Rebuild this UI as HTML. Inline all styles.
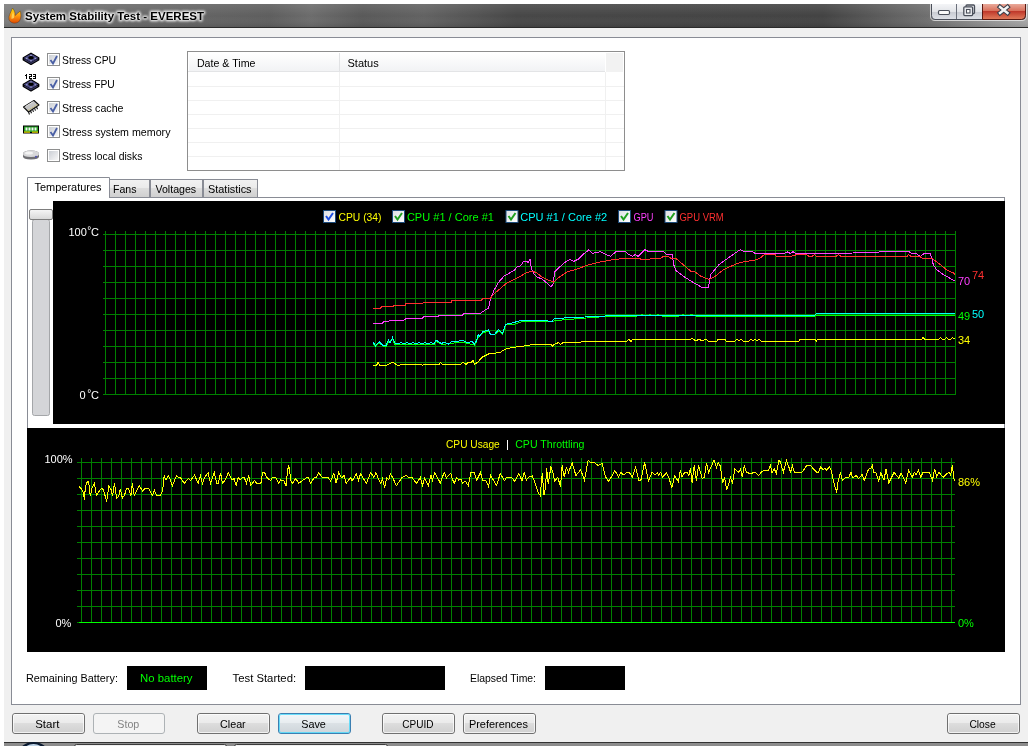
<!DOCTYPE html>
<html><head><meta charset="utf-8"><title>System Stability Test - EVEREST</title>
<style>
html,body{margin:0;padding:0;background:#fff;}
body{width:1032px;height:746px;overflow:hidden;position:relative;}
svg{position:absolute;left:0;top:0;display:block;will-change:transform;}
text{font-family:"Liberation Sans", sans-serif;}
</style></head><body>
<svg width="1032" height="746" viewBox="0 0 1032 746">
<defs>
<linearGradient id="gTitle" x1="0" y1="0" x2="1" y2="0">
 <stop offset="0" stop-color="#7d7d7d"/><stop offset="0.12" stop-color="#696969"/><stop offset="0.26" stop-color="#5e5e5e"/><stop offset="0.30" stop-color="#6c6c6c"/>
 <stop offset="0.35" stop-color="#595959"/><stop offset="0.41" stop-color="#626262"/><stop offset="0.5" stop-color="#474747"/>
 <stop offset="0.8" stop-color="#434343"/><stop offset="0.9" stop-color="#6e6e6e"/><stop offset="0.97" stop-color="#9a9a9a"/><stop offset="1" stop-color="#a8a8a8"/>
</linearGradient>
<linearGradient id="gTitleV" x1="0" y1="0" x2="0" y2="1">
 <stop offset="0" stop-color="#fff" stop-opacity="0.10"/><stop offset="0.5" stop-color="#fff" stop-opacity="0"/><stop offset="1" stop-color="#000" stop-opacity="0.12"/>
</linearGradient>
<linearGradient id="gBtn" x1="0" y1="0" x2="0" y2="1">
 <stop offset="0" stop-color="#f3f3f3"/><stop offset="0.45" stop-color="#ebebeb"/><stop offset="0.5" stop-color="#dddddd"/><stop offset="1" stop-color="#cfcfcf"/>
</linearGradient>
<linearGradient id="gBtnF" x1="0" y1="0" x2="0" y2="1">
 <stop offset="0" stop-color="#f2f6f9"/><stop offset="0.45" stop-color="#e8edf0"/><stop offset="0.5" stop-color="#dbe1e5"/><stop offset="1" stop-color="#cdd4d9"/>
</linearGradient>
<linearGradient id="gTab" x1="0" y1="0" x2="0" y2="1">
 <stop offset="0" stop-color="#f2f2f2"/><stop offset="0.45" stop-color="#ebebeb"/><stop offset="0.5" stop-color="#dddddd"/><stop offset="1" stop-color="#cfcfcf"/>
</linearGradient>
<linearGradient id="gHdr" x1="0" y1="0" x2="0" y2="1">
 <stop offset="0" stop-color="#ffffff"/><stop offset="1" stop-color="#f1f2f4"/>
</linearGradient>
<linearGradient id="gChk" x1="0" y1="0" x2="1" y2="1">
 <stop offset="0" stop-color="#cbcfd5"/><stop offset="1" stop-color="#f7f7f7"/>
</linearGradient>
<linearGradient id="gChk2" x1="0" y1="0" x2="1" y2="1">
 <stop offset="0" stop-color="#dcdfe3"/><stop offset="1" stop-color="#ffffff"/>
</linearGradient>
<linearGradient id="gCapBtn" x1="0" y1="0" x2="0" y2="1">
 <stop offset="0" stop-color="#f4f5f7"/><stop offset="0.5" stop-color="#e2e4e8"/><stop offset="0.55" stop-color="#c9ccd3"/><stop offset="1" stop-color="#dfe2e8"/>
</linearGradient>
<linearGradient id="gClose" x1="0" y1="0" x2="0" y2="1">
 <stop offset="0" stop-color="#e9a99a"/><stop offset="0.45" stop-color="#d9715c"/><stop offset="0.5" stop-color="#c0392b"/><stop offset="1" stop-color="#e07a5a"/>
</linearGradient>
<linearGradient id="gThumb" x1="0" y1="0" x2="0" y2="1">
 <stop offset="0" stop-color="#f6f6f6"/><stop offset="1" stop-color="#d7d7d7"/>
</linearGradient>
<linearGradient id="gFlame" x1="0" y1="0" x2="0" y2="1">
 <stop offset="0" stop-color="#ffe600"/><stop offset="0.5" stop-color="#ff9a10"/><stop offset="1" stop-color="#e04a00"/>
</linearGradient>
<linearGradient id="gOrb" x1="0" y1="0" x2="0" y2="1">
 <stop offset="0" stop-color="#c4d8ea"/><stop offset="1" stop-color="#6f97bd"/>
</linearGradient>
<filter id="blur1" x="-10%" y="-60%" width="120%" height="220%"><feGaussianBlur stdDeviation="1.2"/></filter>
<filter id="glow" x="-10%" y="-50%" width="120%" height="200%">
 <feGaussianBlur in="SourceAlpha" stdDeviation="1.6" result="b"/>
 <feFlood flood-color="#ffffff" flood-opacity="0.85"/><feComposite in2="b" operator="in" result="w"/>
 <feMerge><feMergeNode in="w"/><feMergeNode in="w"/><feMergeNode in="SourceGraphic"/></feMerge>
</filter>
</defs><rect x="4" y="4" width="1024" height="738" fill="#f0f0f0"/><rect x="4" y="4" width="1024" height="24" fill="url(#gTitle)"/><rect x="4" y="4" width="1024" height="24" fill="url(#gTitleV)"/><rect x="4" y="27" width="1024" height="1" fill="#2a2a2a"/><path d="M9 19.5 C8.2 16 10.5 13 12.5 8 C14.5 10.5 15.5 13 15.2 15.5 C16.5 14 18.5 12.5 20.2 11 C21.5 15 21.2 19.5 18.5 22 C15.5 24 10.5 23.5 9 19.5 Z" fill="url(#gFlame)" stroke="#5a3a20" stroke-width="0.7" stroke-opacity="0.7"/><path d="M11.5 19 C11 16.5 12.5 14 13 11.5 C14 14 14.5 16 14 18 Z" fill="#ffe870" opacity="0.7"/><g filter="url(#blur1)"><text x="25.1" y="20" fill="#fff" font-size="11" font-weight="bold" text-anchor="start" textLength="179" lengthAdjust="spacingAndGlyphs" stroke="#fff" stroke-width="2.4" stroke-linejoin="round" opacity="0.9">System Stability Test - EVEREST</text></g><text x="25.1" y="20" fill="#000" font-size="11" font-weight="bold" text-anchor="start" textLength="179" lengthAdjust="spacingAndGlyphs" >System Stability Test - EVEREST</text><path d="M930.5 4 V16 Q930.5 20.5 935 20.5 H1022 Q1026.5 20.5 1026.5 16 V4" fill="none" stroke="#e8e8e8" stroke-opacity="0.8" stroke-width="1"/><path d="M931.5 4 V15.5 Q931.5 19.5 935 19.5 H1021.5 Q1025.5 19.5 1025.5 15.5 V4" fill="url(#gCapBtn)" stroke="#4a4f5a" stroke-width="1"/><path d="M982.5 4 H1025 V15.5 Q1025 19 1021.5 19 H982.5 Z" fill="url(#gClose)"/><path d="M982.5 4 V19.5 H1021.5 Q1025.5 19.5 1025.5 15.5 V4" fill="none" stroke="#5a1810" stroke-width="1"/><rect x="956" y="4" width="1" height="15" fill="#6a6f7a"/><rect x="938.5" y="10.5" width="11" height="4" rx="1.2" fill="#fafafa" stroke="#4a4f5a" stroke-width="1.2"/><rect x="966" y="5" width="8.5" height="8.5" rx="1" fill="#eceef2" stroke="#4a4f5a" stroke-width="1.3"/><rect x="963.8" y="6.8" width="8.8" height="8.8" rx="1" fill="#eceef2" stroke="#4a4f5a" stroke-width="1.3"/><rect x="966.5" y="9.5" width="3.5" height="3.5" fill="#fff" stroke="#4a4f5a" stroke-width="1.1"/><path d="M1000 7 L1007.5 13 M1007.5 7 L1000 13" stroke="#3a3f4a" stroke-width="4.6" stroke-linecap="square"/><path d="M1000 7 L1007.5 13 M1007.5 7 L1000 13" stroke="#f4f4f4" stroke-width="2.4" stroke-linecap="square"/><rect x="11.5" y="37.5" width="1009" height="667" fill="#fff" stroke="#898c95" stroke-width="1"/><rect x="47.5" y="53.5" width="12" height="12" fill="#fff" stroke="#8e8f8f"/><rect x="49" y="55" width="9" height="9" fill="url(#gChk)"/><path d="M50.5 60 L53 63.5 L57 56" fill="none" stroke="#4a5fa5" stroke-width="1.8"/><text x="62" y="64" fill="#000" font-size="11" font-weight="normal" text-anchor="start" textLength="54" lengthAdjust="spacingAndGlyphs" >Stress CPU</text><rect x="47.5" y="77.5" width="12" height="12" fill="#fff" stroke="#8e8f8f"/><rect x="49" y="79" width="9" height="9" fill="url(#gChk)"/><path d="M50.5 84 L53 87.5 L57 80" fill="none" stroke="#4a5fa5" stroke-width="1.8"/><text x="62" y="88" fill="#000" font-size="11" font-weight="normal" text-anchor="start" textLength="52.8" lengthAdjust="spacingAndGlyphs" >Stress FPU</text><rect x="47.5" y="101.5" width="12" height="12" fill="#fff" stroke="#8e8f8f"/><rect x="49" y="103" width="9" height="9" fill="url(#gChk)"/><path d="M50.5 108 L53 111.5 L57 104" fill="none" stroke="#4a5fa5" stroke-width="1.8"/><text x="62" y="112" fill="#000" font-size="11" font-weight="normal" text-anchor="start" textLength="61.5" lengthAdjust="spacingAndGlyphs" >Stress cache</text><rect x="47.5" y="125.5" width="12" height="12" fill="#fff" stroke="#8e8f8f"/><rect x="49" y="127" width="9" height="9" fill="url(#gChk)"/><path d="M50.5 132 L53 135.5 L57 128" fill="none" stroke="#4a5fa5" stroke-width="1.8"/><text x="62" y="136" fill="#000" font-size="11" font-weight="normal" text-anchor="start" textLength="108.5" lengthAdjust="spacingAndGlyphs" >Stress system memory</text><rect x="47.5" y="149.5" width="12" height="12" fill="#fff" stroke="#8e8f8f"/><rect x="49" y="151" width="9" height="9" fill="url(#gChk)"/><text x="62" y="160" fill="#000" font-size="11" font-weight="normal" text-anchor="start" textLength="80.5" lengthAdjust="spacingAndGlyphs" >Stress local disks</text><path d="M23.4 58 L31 53.4 L38.6 58 L38.6 59.8 L31 64.2 L23.4 59.8 Z" fill="#000" stroke="#000" stroke-width="1.6" stroke-linejoin="round"/><path d="M24.4 58 L31 54.2 L37.6 58 L31 61.8 Z" fill="#4e4e8c" stroke="#4e4e8c" stroke-width="0.8" stroke-linejoin="round"/><path d="M24.4 59.5 L31 63.2 L37.6 59.5" fill="none" stroke="#34345e" stroke-width="1.2"/><ellipse cx="31" cy="57.8" rx="2.8" ry="1.7" fill="#000"/><circle cx="26.8" cy="58.3" r="0.6" fill="#d0d0e8"/><circle cx="35.2" cy="58.3" r="0.6" fill="#d0d0e8"/><circle cx="31" cy="60.6" r="0.6" fill="#d0d0e8"/><circle cx="31" cy="55.4" r="0.6" fill="#d0d0e8"/><path d="M23.4 84.5 L31 79.9 L38.6 84.5 L38.6 86.3 L31 90.7 L23.4 86.3 Z" fill="#000" stroke="#000" stroke-width="1.6" stroke-linejoin="round"/><path d="M24.4 84.5 L31 80.7 L37.6 84.5 L31 88.3 Z" fill="#4e4e8c" stroke="#4e4e8c" stroke-width="0.8" stroke-linejoin="round"/><path d="M24.4 86.0 L31 89.7 L37.6 86.0" fill="none" stroke="#34345e" stroke-width="1.2"/><ellipse cx="31" cy="84.3" rx="2.8" ry="1.7" fill="#000"/><circle cx="26.8" cy="84.8" r="0.6" fill="#d0d0e8"/><circle cx="35.2" cy="84.8" r="0.6" fill="#d0d0e8"/><circle cx="31" cy="87.1" r="0.6" fill="#d0d0e8"/><circle cx="31" cy="81.9" r="0.6" fill="#d0d0e8"/><g fill="#000"><rect x="26" y="74" width="1" height="5"/><rect x="25" y="75" width="1" height="1"/><rect x="29" y="74" width="3" height="1"/><rect x="31" y="75" width="1" height="1"/><rect x="29" y="76" width="3" height="1"/><rect x="29" y="77" width="1" height="1"/><rect x="29" y="78" width="3" height="1"/><rect x="33" y="74" width="3" height="1"/><rect x="35" y="75" width="1" height="3"/><rect x="33" y="76" width="3" height="1"/><rect x="33" y="78" width="3" height="1"/></g><path d="M23.5 107 L34 100.5 L39 105 L28.5 112 Z" fill="#c4c4c4" stroke="#111" stroke-width="1.1" stroke-linejoin="round"/><path d="M25.5 106.5 L33.5 101.5" fill="none" stroke="#eeeeee" stroke-width="1"/><path d="M28.5 112 L29.5 114.5 M30.5 110.7 L31.5 113.2 M32.5 109.4 L33.5 111.9 M34.5 108.1 L35.5 110.6 M36.5 106.8 L37.5 109.3" stroke="#111" stroke-width="1.1"/><path d="M28.5 110 h0.8 M30.5 108.7 h0.8 M32.5 107.4 h0.8 M34.5 106.1 h0.8 M36.5 104.8 h0.8" stroke="#c8b020" stroke-width="1"/><rect x="23" y="125.5" width="16" height="8" fill="#000"/><rect x="24" y="126.5" width="14" height="5.5" fill="#22a022"/><path d="M25.5 127.5 h2 v3 h-2z M28.5 127.5 h2 v3 h-2z M31.5 127.5 h2 v3 h-2z M34.5 127.5 h2 v3 h-2z" fill="#f4f4f4"/><path d="M24 132.2 h6 M32 132.2 h6" stroke="#e8d000" stroke-width="1.3"/><path d="M23 154 Q23 150.5 31 150.5 Q39 150.5 39 154 L39 156.5 Q39 159.5 31 159.5 Q23 159.5 23 156.5 Z" fill="#707074"/><path d="M23 154 Q23 150.5 31 150.5 Q39 150.5 39 154 Q39 157 31 157 Q23 157 23 154 Z" fill="#d8d8da"/><ellipse cx="29" cy="153" rx="4" ry="1.6" fill="#f4f4f4"/><circle cx="36" cy="156.8" r="1" fill="#5050b0"/><rect x="187.5" y="51.5" width="437" height="119" fill="#fff" stroke="#8e8e8e"/><rect x="189" y="53" width="416" height="19" fill="url(#gHdr)"/><rect x="606" y="53" width="17" height="19" fill="#f2f2f2"/><rect x="188" y="71" width="417" height="1" fill="#e3e4e6"/><rect x="339" y="53" width="1" height="18" fill="#e1e2e4"/><rect x="188" y="86" width="436" height="1" fill="#f0f0f0"/><rect x="188" y="100" width="436" height="1" fill="#f0f0f0"/><rect x="188" y="114" width="436" height="1" fill="#f0f0f0"/><rect x="188" y="128" width="436" height="1" fill="#f0f0f0"/><rect x="188" y="142" width="436" height="1" fill="#f0f0f0"/><rect x="188" y="156" width="436" height="1" fill="#f0f0f0"/><rect x="339" y="72" width="1" height="98" fill="#f0f0f0"/><rect x="605" y="72" width="1" height="98" fill="#f0f0f0"/><text x="196.9" y="67" fill="#000" font-size="11" font-weight="normal" text-anchor="start" textLength="58.6" lengthAdjust="spacingAndGlyphs" >Date &amp; Time</text><text x="347.5" y="67" fill="#000" font-size="11" font-weight="normal" text-anchor="start"  >Status</text><rect x="27.5" y="197.5" width="977" height="231" fill="#fff" stroke="#898c95"/><rect x="109.5" y="179.5" width="40" height="18" fill="url(#gTab)" stroke="#898c95"/><text x="113" y="193" fill="#000" font-size="11" font-weight="normal" text-anchor="start" textLength="23.5" lengthAdjust="spacingAndGlyphs" >Fans</text><rect x="150.5" y="179.5" width="52" height="18" fill="url(#gTab)" stroke="#898c95"/><text x="155.4" y="193" fill="#000" font-size="11" font-weight="normal" text-anchor="start" textLength="40.8" lengthAdjust="spacingAndGlyphs" >Voltages</text><rect x="203.5" y="179.5" width="54" height="18" fill="url(#gTab)" stroke="#898c95"/><text x="208.1" y="193" fill="#000" font-size="11" font-weight="normal" text-anchor="start" textLength="43.4" lengthAdjust="spacingAndGlyphs" >Statistics</text><path d="M27.5 198 V177.5 H109.5 V198" fill="#fff" stroke="#898c95"/><rect x="28" y="197" width="81" height="2" fill="#fff"/><text x="34.5" y="191" fill="#000" font-size="11" font-weight="normal" text-anchor="start" textLength="67" lengthAdjust="spacingAndGlyphs" >Temperatures</text><rect x="32.5" y="219.5" width="17" height="196" rx="2" fill="#d4d5d8" stroke="#a4a6a9"/><rect x="29.5" y="209.5" width="23" height="10" rx="1.5" fill="url(#gThumb)" stroke="#7d7d7d"/><rect x="53" y="201" width="952" height="223" fill="#000"/><rect x="103" y="234" width="853" height="1" fill="#008000"/><rect x="103" y="250" width="853" height="1" fill="#008000"/><rect x="103" y="266" width="853" height="1" fill="#008000"/><rect x="103" y="282" width="853" height="1" fill="#008000"/><rect x="103" y="298" width="853" height="1" fill="#008000"/><rect x="103" y="314" width="853" height="1" fill="#008000"/><rect x="103" y="330" width="853" height="1" fill="#008000"/><rect x="103" y="346" width="853" height="1" fill="#008000"/><rect x="103" y="362" width="853" height="1" fill="#008000"/><rect x="103" y="378" width="853" height="1" fill="#008000"/><rect x="103" y="394" width="853" height="1" fill="#008000"/><rect x="105" y="231" width="1" height="164" fill="#008000"/><rect x="115" y="231" width="1" height="164" fill="#008000"/><rect x="125" y="231" width="1" height="164" fill="#008000"/><rect x="135" y="231" width="1" height="164" fill="#008000"/><rect x="145" y="231" width="1" height="164" fill="#008000"/><rect x="155" y="231" width="1" height="164" fill="#008000"/><rect x="165" y="231" width="1" height="164" fill="#008000"/><rect x="175" y="231" width="1" height="164" fill="#008000"/><rect x="185" y="231" width="1" height="164" fill="#008000"/><rect x="195" y="231" width="1" height="164" fill="#008000"/><rect x="205" y="231" width="1" height="164" fill="#008000"/><rect x="215" y="231" width="1" height="164" fill="#008000"/><rect x="225" y="231" width="1" height="164" fill="#008000"/><rect x="235" y="231" width="1" height="164" fill="#008000"/><rect x="245" y="231" width="1" height="164" fill="#008000"/><rect x="255" y="231" width="1" height="164" fill="#008000"/><rect x="265" y="231" width="1" height="164" fill="#008000"/><rect x="275" y="231" width="1" height="164" fill="#008000"/><rect x="285" y="231" width="1" height="164" fill="#008000"/><rect x="295" y="231" width="1" height="164" fill="#008000"/><rect x="305" y="231" width="1" height="164" fill="#008000"/><rect x="315" y="231" width="1" height="164" fill="#008000"/><rect x="325" y="231" width="1" height="164" fill="#008000"/><rect x="335" y="231" width="1" height="164" fill="#008000"/><rect x="345" y="231" width="1" height="164" fill="#008000"/><rect x="355" y="231" width="1" height="164" fill="#008000"/><rect x="365" y="231" width="1" height="164" fill="#008000"/><rect x="375" y="231" width="1" height="164" fill="#008000"/><rect x="385" y="231" width="1" height="164" fill="#008000"/><rect x="395" y="231" width="1" height="164" fill="#008000"/><rect x="405" y="231" width="1" height="164" fill="#008000"/><rect x="415" y="231" width="1" height="164" fill="#008000"/><rect x="425" y="231" width="1" height="164" fill="#008000"/><rect x="435" y="231" width="1" height="164" fill="#008000"/><rect x="445" y="231" width="1" height="164" fill="#008000"/><rect x="455" y="231" width="1" height="164" fill="#008000"/><rect x="465" y="231" width="1" height="164" fill="#008000"/><rect x="475" y="231" width="1" height="164" fill="#008000"/><rect x="485" y="231" width="1" height="164" fill="#008000"/><rect x="495" y="231" width="1" height="164" fill="#008000"/><rect x="505" y="231" width="1" height="164" fill="#008000"/><rect x="515" y="231" width="1" height="164" fill="#008000"/><rect x="525" y="231" width="1" height="164" fill="#008000"/><rect x="535" y="231" width="1" height="164" fill="#008000"/><rect x="545" y="231" width="1" height="164" fill="#008000"/><rect x="555" y="231" width="1" height="164" fill="#008000"/><rect x="565" y="231" width="1" height="164" fill="#008000"/><rect x="575" y="231" width="1" height="164" fill="#008000"/><rect x="585" y="231" width="1" height="164" fill="#008000"/><rect x="595" y="231" width="1" height="164" fill="#008000"/><rect x="605" y="231" width="1" height="164" fill="#008000"/><rect x="615" y="231" width="1" height="164" fill="#008000"/><rect x="625" y="231" width="1" height="164" fill="#008000"/><rect x="635" y="231" width="1" height="164" fill="#008000"/><rect x="645" y="231" width="1" height="164" fill="#008000"/><rect x="655" y="231" width="1" height="164" fill="#008000"/><rect x="665" y="231" width="1" height="164" fill="#008000"/><rect x="675" y="231" width="1" height="164" fill="#008000"/><rect x="685" y="231" width="1" height="164" fill="#008000"/><rect x="695" y="231" width="1" height="164" fill="#008000"/><rect x="705" y="231" width="1" height="164" fill="#008000"/><rect x="715" y="231" width="1" height="164" fill="#008000"/><rect x="725" y="231" width="1" height="164" fill="#008000"/><rect x="735" y="231" width="1" height="164" fill="#008000"/><rect x="745" y="231" width="1" height="164" fill="#008000"/><rect x="755" y="231" width="1" height="164" fill="#008000"/><rect x="765" y="231" width="1" height="164" fill="#008000"/><rect x="775" y="231" width="1" height="164" fill="#008000"/><rect x="785" y="231" width="1" height="164" fill="#008000"/><rect x="795" y="231" width="1" height="164" fill="#008000"/><rect x="805" y="231" width="1" height="164" fill="#008000"/><rect x="815" y="231" width="1" height="164" fill="#008000"/><rect x="825" y="231" width="1" height="164" fill="#008000"/><rect x="835" y="231" width="1" height="164" fill="#008000"/><rect x="845" y="231" width="1" height="164" fill="#008000"/><rect x="855" y="231" width="1" height="164" fill="#008000"/><rect x="865" y="231" width="1" height="164" fill="#008000"/><rect x="875" y="231" width="1" height="164" fill="#008000"/><rect x="885" y="231" width="1" height="164" fill="#008000"/><rect x="895" y="231" width="1" height="164" fill="#008000"/><rect x="905" y="231" width="1" height="164" fill="#008000"/><rect x="915" y="231" width="1" height="164" fill="#008000"/><rect x="925" y="231" width="1" height="164" fill="#008000"/><rect x="935" y="231" width="1" height="164" fill="#008000"/><rect x="945" y="231" width="1" height="164" fill="#008000"/><rect x="955" y="231" width="1" height="164" fill="#008000"/><text x="68.5" y="236" fill="#fff" font-size="11" font-weight="normal" text-anchor="start"  >100</text><text x="87.3" y="233.5" fill="#fff" font-size="10" font-weight="normal" text-anchor="start"  >°</text><text x="91" y="236" fill="#fff" font-size="11" font-weight="normal" text-anchor="start"  >C</text><text x="79.5" y="399" fill="#fff" font-size="11" font-weight="normal" text-anchor="start"  >0</text><text x="87.3" y="396.5" fill="#fff" font-size="10" font-weight="normal" text-anchor="start"  >°</text><text x="91" y="399" fill="#fff" font-size="11" font-weight="normal" text-anchor="start"  >C</text><rect x="323.5" y="210.5" width="12" height="12" fill="url(#gChk2)" stroke="#1c4a7a"/><path d="M326 216 L328.5 219.5 L333 213" fill="none" stroke="#2050e0" stroke-width="2"/><text x="338.5" y="221" fill="#ffff00" font-size="11" font-weight="normal" text-anchor="start" textLength="43" lengthAdjust="spacingAndGlyphs" >CPU (34)</text><rect x="392.5" y="210.5" width="12" height="12" fill="url(#gChk2)" stroke="#1c4a7a"/><path d="M395 216 L397.5 219.5 L402 213" fill="none" stroke="#20a020" stroke-width="2"/><text x="406.9" y="221" fill="#00ff00" font-size="11" font-weight="normal" text-anchor="start" textLength="87.1" lengthAdjust="spacingAndGlyphs" >CPU #1 / Core #1</text><rect x="506" y="210.5" width="12" height="12" fill="url(#gChk2)" stroke="#1c4a7a"/><path d="M508.5 216 L511 219.5 L515.5 213" fill="none" stroke="#20a020" stroke-width="2"/><text x="520.2" y="221" fill="#00ffff" font-size="11" font-weight="normal" text-anchor="start" textLength="87" lengthAdjust="spacingAndGlyphs" >CPU #1 / Core #2</text><rect x="618.5" y="210.5" width="12" height="12" fill="url(#gChk2)" stroke="#1c4a7a"/><path d="M621 216 L623.5 219.5 L628 213" fill="none" stroke="#20a020" stroke-width="2"/><text x="633.5" y="221" fill="#ff40ff" font-size="11" font-weight="normal" text-anchor="start" textLength="20" lengthAdjust="spacingAndGlyphs" >GPU</text><rect x="665" y="210.5" width="12" height="12" fill="url(#gChk2)" stroke="#1c4a7a"/><path d="M667.5 216 L670 219.5 L674.5 213" fill="none" stroke="#20a020" stroke-width="2"/><text x="679.5" y="221" fill="#ff3030" font-size="11" font-weight="normal" text-anchor="start" textLength="44.2" lengthAdjust="spacingAndGlyphs" >GPU VRM</text><g shape-rendering="crispEdges"><polyline points="373,365.5 376.5,365.5 378.1,362.3 379.7,365.5 386.1,365.5 392.5,362.3 397.9,365.5 403.2,364.4 421.3,364.4 422.4,365.5 423.4,364.4 439.4,364.4 440.5,362.3 442.6,364.4 460.8,364.4 462.9,362.3 466.1,364.4 468.2,362.3 471.4,362.3 473,360.2 474.6,364.4 478,361.8 482.7,356.9 488.5,354 500,352.5 504.9,349.2 510.7,347.8 512.6,347.3 520.4,346.6 533.5,344.4 550.9,344.4 552.4,346.3 554.3,344.4 558.7,342.5 560.6,344.4 563,342.5 579,342.5 582.4,341.5 626.9,341.5 628.5,339.2 631,341.5 632.6,339.5 693,339 696,341 699,339 702,341 706,339 708,341 717,341 718,339 725,339 726,341 735,341 737,339 739,341 741,339 743,341 749,341 751,339 753,341 755,339 757,341 759,339 761,341 763,341 799,341 800,339 815,339 816.5,341 818,339 922,339 923,337.5 924.5,339 939,339 940.5,337.5 942,339 945,339 946.5,337.5 948,339 951,339 952.5,337.5 955,339" fill="none" stroke="#ffff00" stroke-width="1" /><polyline points="373,344 375.5,346.5 379.2,343 383,346 386,346.5 388.3,342 392.5,339 394.7,344.5 398,345 434,344.5 436,341.5 441.6,344.5 461.8,342 474.4,345 476.3,342 478.2,337 482.6,333 488.4,331 490.3,334.5 494.7,334.5 498.6,331 502.5,334 505.4,325.5 507.3,324 515,324 519.4,322.6 523,321.4 552.4,321.4 556,320.5 605,316.5 638,316 642,314.5 646,316 650,314.5 654,316 658,314.5 662,316 679,316 683,314.5 687,316 691,314.5 696,316 815,316 817,315 955,315" fill="none" stroke="#00ff00" stroke-width="1" /><polyline points="373,342 375.5,345.8 379.2,341.5 383,345.3 386,345.8 388.3,340 390,343 392.5,337.6 394.7,343 398,344 401,342.5 404,344 407,342.5 410,344 413,342.5 416,344 419,342.5 422,344 425,342.5 428,344 431,342.5 434,344 436.2,340 441.6,343.7 444,342 449,344.2 451.2,341.5 456,342 461.8,340 466,342 470,342 472,341.5 474.4,344.1 476.3,341 478.2,334.7 479.7,336.2 482.6,331.8 488.4,329.9 490.3,334.2 494.7,334.2 498.6,329.4 502.5,333.3 505.4,325 507.3,324 515,322.4 516.5,321.4 523.3,320.5 552.4,321.1 554.3,318.5 605,316 636,315.2 815,315.2 817,313 955,313" fill="none" stroke="#00ffff" stroke-width="1" /><polyline points="373,323.5 382,323.5 384,321.3 404,320.2 406,318.6 422,318.3 424,316.6 438,316.2 440,315.4 462,315.4 464,313.3 480.6,313.3 485.6,309.6 488.5,308.2 490.7,298 494.4,289.4 498.7,282.2 503.8,276.3 508.9,273.4 514.7,269.8 517.6,266.2 520.5,266 523.4,261.5 526.3,261.5 528.5,262.5 530,258.9 531.4,268.3 533.6,273.4 537.2,277 542.3,279.2 546.7,282.9 551,287.2 553.2,283.6 554.7,272 559.8,266.9 565.6,261.8 570,259.6 573.6,261.5 578.7,258.9 583,254.5 588.8,249.9 592.5,253.4 600.5,251.6 603.4,253.4 610.6,256.3 616.5,251.3 625.2,251.6 628,253.8 632.5,256.5 635,254.5 638.2,256.5 644.8,249.6 648,251.2 663,251.2 666.2,254 672,254 673.7,264.7 676,270.5 684.4,277 692.6,282 702.5,287.8 708.3,287.8 710.7,274.6 719,264.7 725.6,259.8 733.8,254 740.4,249.6 743.7,251.2 752.7,251.5 755.2,253.5 784.9,253.2 787.3,251.9 790.6,253.5 793,251.5 795.6,253.5 798.2,253.5 839.4,253.5 892.1,251.5 908.6,251.5 911.9,253.5 916.9,254 920.1,256.5 923.4,254 930,253.5 931.7,258 933.3,264.7 936.6,269.7 943.2,274.6 948.2,277 952.3,279.9 955,280.4" fill="none" stroke="#ff40ff" stroke-width="1" /><polyline points="373,308.5 380,308.5 382,306.5 393,306.5 394,305.5 405,305.5 406,303.5 422,303.5 424,302.5 451,302.5 452,300.5 481,300.5 483,298.5 490,298.5 494,294 506,283.6 515,279.2 520.5,276.3 526.3,272.7 532.2,271.2 536.5,272.7 541,276.3 548,280 554,282.2 558.3,277.8 567,272 577,269 589,264.7 597.6,262.5 613.5,259.6 626.6,258.2 640,258.5 641,259.4 660.5,258.5 663,256.5 668.7,256.5 671.2,258.5 676,258.5 691,271.3 694.2,271.3 700.8,276.2 709,279.5 715.7,276 722.3,270.5 728.8,267.2 738.7,263 745.3,261.4 753.6,260.6 760.2,258.1 764.3,254.5 775,254.5 776.6,256.5 790,256.5 797.4,254.5 806.5,254.5 809,256.5 812,256.5 814.7,254.5 816.4,256.5 836,256.5 838.6,254.5 841,256.5 907,256.5 908.6,254.5 911,256.5 920,256.5 922,258 931.7,258 935,260.6 941.6,265.5 947.3,270.5 953,272.6 955,274.6" fill="none" stroke="#ff3030" stroke-width="1" /></g><text x="958" y="285" fill="#ff40ff" font-size="11" font-weight="normal" text-anchor="start"  >70</text><text x="972" y="279" fill="#ff3030" font-size="11" font-weight="normal" text-anchor="start"  >74</text><text x="958" y="320" fill="#00ff00" font-size="11" font-weight="normal" text-anchor="start"  >49</text><text x="972" y="318" fill="#00ffff" font-size="11" font-weight="normal" text-anchor="start"  >50</text><text x="958" y="344" fill="#ffff00" font-size="11" font-weight="normal" text-anchor="start"  >34</text><rect x="27" y="428" width="978" height="224" fill="#000"/><rect x="77" y="462" width="878" height="1" fill="#008000"/><rect x="77" y="478" width="878" height="1" fill="#008000"/><rect x="77" y="494" width="878" height="1" fill="#008000"/><rect x="77" y="510" width="878" height="1" fill="#008000"/><rect x="77" y="526" width="878" height="1" fill="#008000"/><rect x="77" y="542" width="878" height="1" fill="#008000"/><rect x="77" y="558" width="878" height="1" fill="#008000"/><rect x="77" y="574" width="878" height="1" fill="#008000"/><rect x="77" y="590" width="878" height="1" fill="#008000"/><rect x="77" y="606" width="878" height="1" fill="#008000"/><rect x="77" y="622" width="878" height="1" fill="#008000"/><rect x="81" y="458" width="1" height="165" fill="#008000"/><rect x="91" y="458" width="1" height="165" fill="#008000"/><rect x="101" y="458" width="1" height="165" fill="#008000"/><rect x="111" y="458" width="1" height="165" fill="#008000"/><rect x="121" y="458" width="1" height="165" fill="#008000"/><rect x="131" y="458" width="1" height="165" fill="#008000"/><rect x="141" y="458" width="1" height="165" fill="#008000"/><rect x="151" y="458" width="1" height="165" fill="#008000"/><rect x="161" y="458" width="1" height="165" fill="#008000"/><rect x="171" y="458" width="1" height="165" fill="#008000"/><rect x="181" y="458" width="1" height="165" fill="#008000"/><rect x="191" y="458" width="1" height="165" fill="#008000"/><rect x="201" y="458" width="1" height="165" fill="#008000"/><rect x="211" y="458" width="1" height="165" fill="#008000"/><rect x="221" y="458" width="1" height="165" fill="#008000"/><rect x="231" y="458" width="1" height="165" fill="#008000"/><rect x="241" y="458" width="1" height="165" fill="#008000"/><rect x="251" y="458" width="1" height="165" fill="#008000"/><rect x="261" y="458" width="1" height="165" fill="#008000"/><rect x="271" y="458" width="1" height="165" fill="#008000"/><rect x="281" y="458" width="1" height="165" fill="#008000"/><rect x="291" y="458" width="1" height="165" fill="#008000"/><rect x="301" y="458" width="1" height="165" fill="#008000"/><rect x="311" y="458" width="1" height="165" fill="#008000"/><rect x="321" y="458" width="1" height="165" fill="#008000"/><rect x="331" y="458" width="1" height="165" fill="#008000"/><rect x="341" y="458" width="1" height="165" fill="#008000"/><rect x="351" y="458" width="1" height="165" fill="#008000"/><rect x="361" y="458" width="1" height="165" fill="#008000"/><rect x="371" y="458" width="1" height="165" fill="#008000"/><rect x="381" y="458" width="1" height="165" fill="#008000"/><rect x="391" y="458" width="1" height="165" fill="#008000"/><rect x="401" y="458" width="1" height="165" fill="#008000"/><rect x="411" y="458" width="1" height="165" fill="#008000"/><rect x="421" y="458" width="1" height="165" fill="#008000"/><rect x="431" y="458" width="1" height="165" fill="#008000"/><rect x="441" y="458" width="1" height="165" fill="#008000"/><rect x="451" y="458" width="1" height="165" fill="#008000"/><rect x="461" y="458" width="1" height="165" fill="#008000"/><rect x="471" y="458" width="1" height="165" fill="#008000"/><rect x="481" y="458" width="1" height="165" fill="#008000"/><rect x="491" y="458" width="1" height="165" fill="#008000"/><rect x="501" y="458" width="1" height="165" fill="#008000"/><rect x="511" y="458" width="1" height="165" fill="#008000"/><rect x="521" y="458" width="1" height="165" fill="#008000"/><rect x="531" y="458" width="1" height="165" fill="#008000"/><rect x="541" y="458" width="1" height="165" fill="#008000"/><rect x="551" y="458" width="1" height="165" fill="#008000"/><rect x="561" y="458" width="1" height="165" fill="#008000"/><rect x="571" y="458" width="1" height="165" fill="#008000"/><rect x="581" y="458" width="1" height="165" fill="#008000"/><rect x="591" y="458" width="1" height="165" fill="#008000"/><rect x="601" y="458" width="1" height="165" fill="#008000"/><rect x="611" y="458" width="1" height="165" fill="#008000"/><rect x="621" y="458" width="1" height="165" fill="#008000"/><rect x="631" y="458" width="1" height="165" fill="#008000"/><rect x="641" y="458" width="1" height="165" fill="#008000"/><rect x="651" y="458" width="1" height="165" fill="#008000"/><rect x="661" y="458" width="1" height="165" fill="#008000"/><rect x="671" y="458" width="1" height="165" fill="#008000"/><rect x="681" y="458" width="1" height="165" fill="#008000"/><rect x="691" y="458" width="1" height="165" fill="#008000"/><rect x="701" y="458" width="1" height="165" fill="#008000"/><rect x="711" y="458" width="1" height="165" fill="#008000"/><rect x="721" y="458" width="1" height="165" fill="#008000"/><rect x="731" y="458" width="1" height="165" fill="#008000"/><rect x="741" y="458" width="1" height="165" fill="#008000"/><rect x="751" y="458" width="1" height="165" fill="#008000"/><rect x="761" y="458" width="1" height="165" fill="#008000"/><rect x="771" y="458" width="1" height="165" fill="#008000"/><rect x="781" y="458" width="1" height="165" fill="#008000"/><rect x="791" y="458" width="1" height="165" fill="#008000"/><rect x="801" y="458" width="1" height="165" fill="#008000"/><rect x="811" y="458" width="1" height="165" fill="#008000"/><rect x="821" y="458" width="1" height="165" fill="#008000"/><rect x="831" y="458" width="1" height="165" fill="#008000"/><rect x="841" y="458" width="1" height="165" fill="#008000"/><rect x="851" y="458" width="1" height="165" fill="#008000"/><rect x="861" y="458" width="1" height="165" fill="#008000"/><rect x="871" y="458" width="1" height="165" fill="#008000"/><rect x="881" y="458" width="1" height="165" fill="#008000"/><rect x="891" y="458" width="1" height="165" fill="#008000"/><rect x="901" y="458" width="1" height="165" fill="#008000"/><rect x="911" y="458" width="1" height="165" fill="#008000"/><rect x="921" y="458" width="1" height="165" fill="#008000"/><rect x="931" y="458" width="1" height="165" fill="#008000"/><rect x="941" y="458" width="1" height="165" fill="#008000"/><rect x="951" y="458" width="1" height="165" fill="#008000"/><rect x="79" y="622" width="876" height="1" fill="#00ff00"/><text x="44.5" y="463" fill="#fff" font-size="11" font-weight="normal" text-anchor="start"  >100%</text><text x="55.5" y="627" fill="#fff" font-size="11" font-weight="normal" text-anchor="start"  >0%</text><text x="958" y="627" fill="#00ff00" font-size="11" font-weight="normal" text-anchor="start"  >0%</text><text x="446" y="448" fill="#ffff00" font-size="11" font-weight="normal" text-anchor="start" textLength="53.7" lengthAdjust="spacingAndGlyphs" >CPU Usage</text><rect x="507" y="440" width="1" height="10" fill="#fff"/><text x="515.2" y="448" fill="#00ff00" font-size="11" font-weight="normal" text-anchor="start" textLength="69.3" lengthAdjust="spacingAndGlyphs" >CPU Throttling</text><g shape-rendering="crispEdges"><polyline points="79.1,486.3 81.2,488.8 82.8,491.2 83.6,495.4 84.5,499.5 85.3,487.1 86.5,483 88.2,481.4 89.4,486.3 90.2,496.2 92.3,487.1 94.4,483.4 96.4,495.4 99.3,491.2 101.4,488.4 103.4,489.6 106.7,501.5 108.8,486.3 111.2,489.6 112.5,496.2 114.5,483.4 116.6,498.7 118.7,496.6 120.3,488.8 122.4,498.2 124.4,495.4 126.5,488.8 128.5,488.8 131,495.4 132.3,483.4 134.3,495.4 139.3,485.5 142.5,491.2 145,488.4 148.7,488.8 152.4,495.4 154.5,490.4 156.6,495.4 160.4,495.4 162.4,491.2 163.2,486.3 164.1,475.6 166.1,480.1 168.2,475.6 170.2,479.7 172.3,486.3 176.4,475.6 178.9,478.1 180.5,477.7 184.2,483.4 188.4,478.5 190.4,480.5 194.5,475.2 198.2,483.4 200.3,475.6 202.4,483.4 204.4,477.7 208.1,472.7 210.6,483.4 214.3,472.7 216.8,483.4 218.4,483.4 220.5,472.7 222.5,483.4 225.4,479.7 228.3,472.7 232,480.1 234.1,478.5 236.1,485.5 238.2,477.7 240.1,480 242.8,477.4 244.4,477.9 246.5,483.3 248.7,475.3 250.8,485.4 254.5,480.6 256.7,483.3 260.9,483.3 262.5,472.6 264.6,472.6 266.8,477.4 270.5,480.6 272.6,477.4 275.8,477.4 278.5,483.3 280.6,480 283.8,480.6 286,485.9 287.6,471 288.6,465.1 289.7,471 290.8,480.6 292.4,483.3 295.6,478.5 298.8,483.3 302.5,480.6 306.2,477.9 308.4,477.4 310.5,483.3 314.2,477.9 316.4,477.4 318.5,472.6 322.2,477.4 328.1,477.4 330.7,481.1 333.9,473.1 336.1,483.3 338.7,472.6 341.4,477.9 344.1,475.3 346.2,483.3 350.5,477.4 352.1,481.1 356.3,473.7 358.5,480 360.6,473.7 362.7,477.4 366.4,483.3 370.7,472.6 373.9,477.4 376,472.6 378.7,479.5 380.8,483.3 382.4,478.5 384.6,488 386.7,477.9 388.8,480 390.4,473.7 393.1,478.5 396.3,485.9 399.5,481.1 402.2,477.4 406.4,475.3 408.6,477.4 411.8,477.4 416.6,483.3 420.3,477.4 422.4,485.4 424.6,478.5 428.3,485.9 431,475.3 432.5,480 434.7,472.6 440.5,483.3 442.1,477.4 444.3,472.6 446.4,477.9 450.7,473.1 452.3,479 454.4,483.3 456.5,477.4 458.7,480 460.8,479 462.4,483.3 465.1,481.1 468.3,485.4 470.9,472.6 474.1,472.6 476.8,480 480.5,472.6 482.6,480.6 485.8,480.6 488.5,486.4 490.6,475.3 496.5,485.4 500.2,473.7 504.5,480.6 506.6,477.4 511.4,477.4 514.6,481.1 518.9,473.7 522.1,481.1 524.2,472.6 526.4,480 528.5,477.4 532.2,475.8 534.3,481.1 538.1,492.3 540.2,495.5 542.3,472.6 543.9,495 545.5,488.4 546.6,468.1 548.2,483.6 550.9,467.1 553,472.9 554.6,481.4 557.8,477.2 560.5,486.8 562.1,465.5 564.2,477.2 566.3,467.6 568.5,472.4 572.2,462.8 575.9,475.6 580.7,469.7 584.4,480.4 588.2,460.1 590.8,462.8 594,462.3 598.3,465.5 602,463.3 605.2,476.1 608.4,481.4 611.6,476.7 614.8,470.3 618.6,477.2 620.7,472.4 623.9,475 626,472.9 629.2,472.4 632.4,477.2 635.6,467.6 638.8,480.4 641,479.9 644.7,462.3 648.4,480.9 650,477.2 652.1,472.4 654.8,475 657.5,472.9 658.5,475 660.7,472.4 662.3,477.2 666.5,472.9 668.7,477.2 671.9,487.8 674.5,475.6 678.3,481.4 680.4,470.3 682,477.2 684.6,472.4 687.3,472.9 688.9,475.6 690.5,468.1 692.1,483 694.2,465.5 696.4,480.9 698.5,465.5 702.2,478.3 704.4,477.2 706.5,462.8 708.6,472.4 714,460.1 716.6,467.6 718.2,462.8 720.4,466 722.5,483 724.6,477.7 726.8,490 730.5,477.7 732.6,483 734.8,468.7 738.5,472.4 740.6,468.7 742.2,477.2 744.3,465.5 746.5,472.4 750.2,473.5 755.5,472.4 758.7,475.6 760.9,472.4 764.6,470.3 768.3,470.3 770.5,465.5 772.1,472.9 774.2,468.7 776.3,473.5 779,460.1 780.6,462.3 783.3,472.4 786.4,460.1 790.7,472.4 792.3,465.5 794.4,472.4 801.9,472.4 806.7,465.5 810.4,465.5 816.8,472.4 818.4,472.4 820.6,467.1 823.2,469.7 824.8,468.1 826.4,470.3 829.6,467.1 831.2,470.8 833.4,480.4 836.6,492.6 838.2,480.9 840.3,472.4 842.4,480.4 845.6,477.2 848.8,477.2 851,472.4 852.5,477.7 856.3,475.6 858.4,478.3 860,477.2 862.1,474 864.3,480.4 868.5,469.2 870.7,468.7 872.3,465.5 873.9,472.4 876,472.9 878.7,481.4 880.8,472.9 884,479.9 886.1,468.7 888.8,483 894.1,472.4 898.9,478.3 901,472.9 905.8,483 908.5,470.3 912.2,477.2 914.4,472.4 916,474.5 918.6,470.3 920.8,477.2 922.9,472.4 929.3,472.4 932.5,480.4 934.6,468.7 936.8,476.7 938.9,472.4 943.2,477.2 946.4,474 949.6,472.4 950.6,475.6 952.2,465.5 954.3,480.9" fill="none" stroke="#ffff00" stroke-width="1" /></g><text x="958" y="486" fill="#ffff00" font-size="11" font-weight="normal" text-anchor="start"  >86%</text><text x="25.9" y="682" fill="#000" font-size="11" font-weight="normal" text-anchor="start" textLength="92" lengthAdjust="spacingAndGlyphs" >Remaining Battery:</text><rect x="127" y="666" width="80" height="24" fill="#000"/><text x="140.1" y="682" fill="#00ff00" font-size="11" font-weight="normal" text-anchor="start" textLength="52.4" lengthAdjust="spacingAndGlyphs" >No battery</text><text x="232.5" y="682" fill="#000" font-size="11" font-weight="normal" text-anchor="start" textLength="63.6" lengthAdjust="spacingAndGlyphs" >Test Started:</text><rect x="305" y="666" width="140" height="24" fill="#000"/><text x="470" y="682" fill="#000" font-size="11" font-weight="normal" text-anchor="start" textLength="66" lengthAdjust="spacingAndGlyphs" >Elapsed Time:</text><rect x="545" y="666" width="80" height="24" fill="#000"/><rect x="12.5" y="713.5" width="72" height="20" rx="2.5" fill="url(#gBtn)" stroke="#707070"/><rect x="13.5" y="714.5" width="70" height="18" rx="1.5" fill="none" stroke="#fff" stroke-opacity="0.7"/><text x="35.2" y="728" fill="#000" font-size="11" font-weight="normal" text-anchor="start" textLength="24.2" lengthAdjust="spacingAndGlyphs" >Start</text><rect x="93.5" y="713.5" width="71" height="20" rx="2.5" fill="#f4f4f4" stroke="#adb2b5"/><text x="117.3" y="728" fill="#838383" font-size="11" font-weight="normal" text-anchor="start" textLength="22" lengthAdjust="spacingAndGlyphs" >Stop</text><rect x="197.5" y="713.5" width="72" height="20" rx="2.5" fill="url(#gBtn)" stroke="#707070"/><rect x="198.5" y="714.5" width="70" height="18" rx="1.5" fill="none" stroke="#fff" stroke-opacity="0.7"/><text x="220" y="728" fill="#000" font-size="11" font-weight="normal" text-anchor="start" textLength="25.7" lengthAdjust="spacingAndGlyphs" >Clear</text><rect x="278.5" y="713.5" width="72" height="20" rx="2.5" fill="url(#gBtnF)" stroke="#3c7fb1"/><rect x="279.5" y="714.5" width="70" height="18" rx="1.5" fill="none" stroke="#48d8fb" stroke-opacity="0.8"/><text x="301.2" y="728" fill="#000" font-size="11" font-weight="normal" text-anchor="start" textLength="24.7" lengthAdjust="spacingAndGlyphs" >Save</text><rect x="382.5" y="713.5" width="72" height="20" rx="2.5" fill="url(#gBtn)" stroke="#707070"/><rect x="383.5" y="714.5" width="70" height="18" rx="1.5" fill="none" stroke="#fff" stroke-opacity="0.7"/><text x="402.2" y="728" fill="#000" font-size="11" font-weight="normal" text-anchor="start" textLength="31.3" lengthAdjust="spacingAndGlyphs" >CPUID</text><rect x="463.5" y="713.5" width="72" height="20" rx="2.5" fill="url(#gBtn)" stroke="#707070"/><rect x="464.5" y="714.5" width="70" height="18" rx="1.5" fill="none" stroke="#fff" stroke-opacity="0.7"/><text x="468.9" y="728" fill="#000" font-size="11" font-weight="normal" text-anchor="start" textLength="59" lengthAdjust="spacingAndGlyphs" >Preferences</text><rect x="947.5" y="713.5" width="72" height="20" rx="2.5" fill="url(#gBtn)" stroke="#707070"/><rect x="948.5" y="714.5" width="70" height="18" rx="1.5" fill="none" stroke="#fff" stroke-opacity="0.7"/><text x="969.4" y="728" fill="#000" font-size="11" font-weight="normal" text-anchor="start" textLength="26.3" lengthAdjust="spacingAndGlyphs" >Close</text><rect x="4" y="742" width="1024" height="4" fill="#8c8c8c"/><rect x="4" y="742" width="1024" height="1" fill="#333"/><ellipse cx="33.5" cy="752" rx="14" ry="10" fill="#0a1a30"/><ellipse cx="33.5" cy="753" rx="11" ry="9" fill="url(#gOrb)"/><rect x="74.5" y="744.5" width="152" height="6" rx="2" fill="#f0f0f0" stroke="#3c3c3c"/><rect x="234.5" y="744.5" width="153" height="6" rx="2" fill="#f0f0f0" stroke="#3c3c3c"/>
</svg>
</body></html>
